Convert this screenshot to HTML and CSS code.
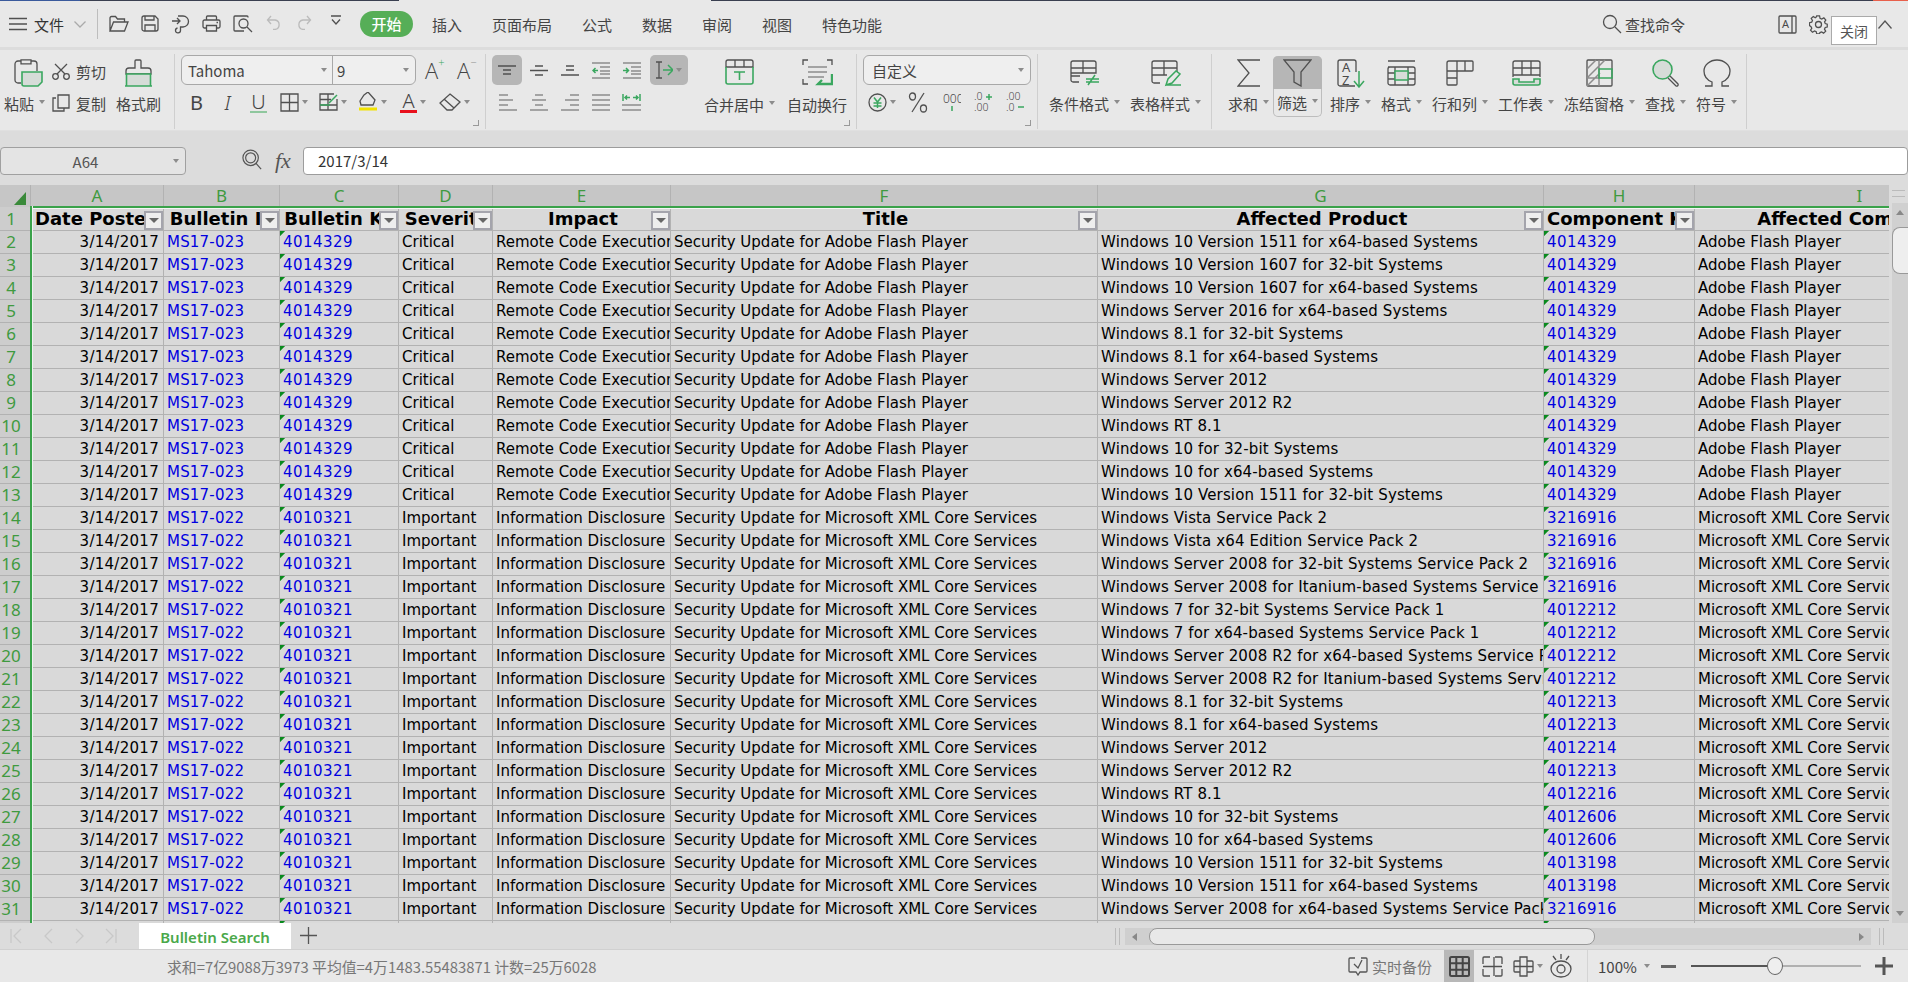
FILE: index.html
```html
<!DOCTYPE html>
<html lang="zh">
<head>
<meta charset="utf-8">
<title>Bulletin Search</title>
<link rel="stylesheet" href="styles.css">
</head>
<body>
<div class="app">
<div class="topline"><i class="tl-blue"></i><i class="tl-dark1"></i><i class="tl-light"></i><i class="tl-dark2"></i><i class="tl-red"></i></div>

<header class="menu">
  <svg class="ham" width="18" height="14" viewBox="0 0 18 14"><path d="M0 1.5h18M0 7h18M0 12.5h18"/></svg>
  <span class="file">文件</span>
  <svg class="chev" width="12" height="7" viewBox="0 0 12 7"><path d="M.5.5 6 6l5.5-5.5"/></svg>
  <span class="mdiv"></span>
  <div class="qat">
    <span class="q"><svg width="20" height="18" viewBox="0 0 20 18"><path d="M1 16V3a1.500 1.500 0 0 1 1.500-1.500h4l2 2.500h7V7M1 16h14.500L19 7H4.500z"/></svg></span>
    <span class="q"><svg width="18" height="17" viewBox="0 0 18 17"><path d="M1 3a2 2 0 0 1 2-2h11l3 3v10a2 2 0 0 1-2 2H3a2 2 0 0 1-2-2zM4 16v-6h10v6M4 1v4h9V1"/></svg></span>
    <span class="q"><svg width="19" height="19" viewBox="0 0 19 19"><path d="M1 6h8M6 3l3 3-3 3M7 1h5a5 5 0 0 1 0 11H9.500v3.500a2.500 2.500 0 1 1-3-2.500"/></svg></span>
    <span class="q"><svg width="19" height="17" viewBox="0 0 19 17"><path d="M4.500 5V2a1 1 0 0 1 1-1h8a1 1 0 0 1 1 1v3M4 13H2.500A1.500 1.500 0 0 1 1 11.500v-5A1.500 1.500 0 0 1 2.500 5h14A1.500 1.500 0 0 1 18 6.500v5a1.500 1.500 0 0 1-1.500 1.500H15M4.500 10.500h10V16h-10zM14.500 7.500h1.500"/></svg></span>
    <span class="q"><svg width="20" height="18" viewBox="0 0 20 18"><path d="M15 2.500V2a1 1 0 0 0-1-1H2a1 1 0 0 0-1 1v13a1 1 0 0 0 1 1h9"/><circle cx="10.500" cy="8.500" r="4.500"/><path d="M14 12l5 5"/></svg></span>
    <span class="q off"><svg width="15" height="15" viewBox="0 0 15 15"><path d="M5 1 1.500 5 5 9M1.500 5h7.500a4.800 4.800 0 0 1 0 9.500H7"/></svg></span>
    <span class="q off"><svg width="15" height="15" viewBox="0 0 15 15"><path d="M10 1l3.500 4L10 9M13.500 5H6a4.800 4.800 0 0 0 0 9.500h2"/></svg></span>
    <span class="q"><svg width="10" height="10" viewBox="0 0 10 10"><path d="M0 1h10M1 4.500 5 9l4-4.500"/></svg></span>
  </div>
  <span class="pill">开始</span>
  <nav class="tabs"><span>插入</span><span>页面布局</span><span>公式</span><span>数据</span><span>审阅</span><span>视图</span><span>特色功能</span></nav>
  <div class="mright">
    <svg width="20" height="20" viewBox="0 0 20 20"><circle cx="8" cy="8" r="6.500"/><path d="M13 13l6 6"/></svg>
    <span class="find">查找命令</span>
    <svg class="book" width="19" height="19" viewBox="0 0 19 19"><path d="M2 1h15a1 1 0 0 1 1 1v15a1 1 0 0 1-1 1H2a1 1 0 0 1-1-1V2a1 1 0 0 1 1-1zM14 1v17"/><text class="svt" x="4" y="13" font-size="11">A</text></svg>
    <svg class="gear" width="19" height="19" viewBox="0 0 19 19"><circle cx="9.500" cy="9.500" r="3"/><path d="M8 1h3l.5 2.500 1.700.8L15.500 3l2 2.200-1.300 2 .7 1.700 2.100.6v3l-2.100.5-.8 1.700 1.300 2.200-2.200 2-2.100-1.300-1.700.7-.5 1.400H8l-.5-2.300-1.700-.7-2.200 1.300-2-2.100 1.300-2.100-.8-1.700L.5 11V8l2.300-.5.8-1.800L2.300 3.500 4.500 1.500l2 1.300 1-.6z" transform="scale(.96)"/></svg>
    <svg class="up" width="14" height="9" viewBox="0 0 14 9"><path d="M.5 8.500 7 1l6.500 7.500"/></svg>
  </div>
  <div class="tip">关闭</div>
</header>

<section class="ribbon">
  <div class="group g1">
    <div class="big paste">
      <span class="ic"><svg width="29" height="28" viewBox="0 0 29 28"><path d="M7 24H4a3 3 0 0 1-3-3V5a3 3 0 0 1 3-3h3M17 2h3a3 3 0 0 1 3 3v7M7 .8h10v4H7z"/><path class="gr" d="M8 13h20v10l-4 4H10a2 2 0 0 1-2-2z"/></svg></span>
      <span class="lb">粘贴<i class="ar"></i></span>
    </div>
    <div class="mid">
      <div class="mi"><svg width="18" height="17" viewBox="0 0 18 17"><circle cx="3.500" cy="13.500" r="2.800"/><circle cx="14.500" cy="13.500" r="2.800"/><path d="M5 11 15 1M13 11 3 1"/></svg><span>剪切</span></div>
      <div class="mi"><svg width="18" height="18" viewBox="0 0 18 18"><path d="M6 1h11v13H6zM4 4H1v13h11v-3"/></svg><span>复制</span></div>
    </div>
    <div class="big brush">
      <span class="ic"><svg width="27" height="28" viewBox="0 0 27 28"><path d="M10 9V2a1 1 0 0 1 1-1h4a1 1 0 0 1 1 1v7h7a3 3 0 0 1 3 3v3H1v-3a3 3 0 0 1 3-3z"/><path class="gr" d="M1.500 15h24v12h-24zM0 27h27"/></svg></span>
      <span class="lb">格式刷</span>
    </div>
  </div>

  <div class="group g2">
    <div class="row1">
      <div class="combo font"><span class="seg seg-font">Tahoma<i class="ar"></i></span><span class="seg seg-size">9<i class="ar"></i></span></div>
      <span class="grow">A<sup>+</sup></span>
      <span class="grow shrink">A<sup>−</sup></span>
    </div>
    <div class="row2">
      <span class="fb w31 b">B</span>
      <span class="fb w31 i">I</span>
      <span class="fb w31"><span class="u">U</span></span>
      <span class="fb w39"><svg width="19" height="19" viewBox="0 0 19 19"><path d="M1 1h17v17H1zM9.500 1v17M1 9.500h17"/></svg><i class="ar"></i></span>
      <span class="fb w39"><svg width="19" height="18" viewBox="0 0 19 18"><path d="M18 6v11H1V1h14M1 6.500h11M1 12h17M9 1v16"/><path class="gl" d="M1 12h10M10 10l8-8"/></svg><i class="ar"></i></span>
      <span class="fb w41"><svg width="20" height="20" viewBox="0 0 20 20"><path d="M6 3 10 0l7 8-2 5H3L2 9z"/><path class="yl" d="M1 17h18"/></svg><i class="ar"></i></span>
      <span class="fb w40"><span class="acolor">A</span><i class="ar"></i></span>
      <span class="fb w42"><svg width="22" height="18" viewBox="0 0 22 18"><path d="M11 1l10 8-8 8H8L1 10zM5 6l10 9"/></svg><i class="ar"></i></span>
    </div>
    <i class="corner"></i>
  </div>

  <div class="group g3">
    <div class="al">
      <div class="alrow">
        <span class="a sel"><svg width="18" height="11" viewBox="0 0 18 11"><path d="M0 1h18M5 5h8M5 9h8"/></svg></span>
        <span class="a"><svg width="18" height="11" viewBox="0 0 18 11"><path d="M5 1h8M0 5.500h18M5 10h8"/></svg></span>
        <span class="a low"><svg width="18" height="11" viewBox="0 0 18 11"><path d="M5 1h8M5 5h8M0 10h18"/></svg></span>
        <span class="a"><svg width="18" height="17" viewBox="0 0 18 17"><path class="lg" d="M0 1h18M8 5h10M8 9h10M0 16h18M8 12h10"/><path class="gl" d="M6 8.500H1M3.500 6 1 8.500 3.500 11"/></svg></span>
        <span class="a"><svg width="18" height="17" viewBox="0 0 18 17"><path class="lg" d="M0 1h18M8 5h10M8 9h10M0 16h18M8 12h10"/><path class="gl" d="M0 8.500h5M3 6l2.500 2.500L3 11"/></svg></span>
        <span class="a sel wide"><svg width="17" height="18" viewBox="0 0 17 18"><path d="M0 1h6M0 17h6M3 1v16"/><path class="gl" d="M7 9h9M12 4l5 5-5 5"/></svg><i class="ar"></i></span>
      </div>
      <div class="alrow two">
        <span class="a"><svg width="18" height="17" viewBox="0 0 18 17"><path class="lg" d="M0 1h9M0 6h14M0 11h9M0 16h18"/></svg></span>
        <span class="a"><svg width="18" height="17" viewBox="0 0 18 17"><path class="lg" d="M5 1h8M2 6h14M5 11h8M0 16h18"/></svg></span>
        <span class="a"><svg width="18" height="17" viewBox="0 0 18 17"><path class="lg" d="M9 1h9M4 6h14M9 11h9M0 16h18"/></svg></span>
        <span class="a"><svg width="18" height="17" viewBox="0 0 18 17"><path class="lg" d="M0 1h18M0 6h18M0 11h18M0 16h18"/></svg></span>
        <span class="a"><svg width="19" height="17" viewBox="0 0 19 17"><path class="lg" d="M0 11h19M0 16h19"/><path class="gl" d="M1 0v7M18 0v7M3 3.500h5M16 3.500h-5M5 1.500 3 3.500 5 5.500M14 1.500l2 2-2 2"/></svg></span>
      </div>
    </div>
    <div class="big merge">
      <span class="ic"><svg width="29" height="26" viewBox="0 0 29 26"><path d="M1 8V3a2 2 0 0 1 2-2h23a2 2 0 0 1 2 2v5H1zM10 1v7M19 1v7"/><path class="gr nf" d="M1 8v15a2 2 0 0 0 2 2h23a2 2 0 0 0 2-2V8M9 13h11M14.500 13v8"/></svg></span>
      <span class="lb">合并居中<i class="ar"></i></span>
    </div>
    <div class="big wrap">
      <span class="ic"><svg width="31" height="27" viewBox="0 0 31 27"><path d="M6 1H1v5M25 1h5v5M1 20v5h5"/><path class="lg" d="M6 8h19M6 13h19M6 18h16"/><path class="gl thick" d="M30 15v10H16M20 21l-4 4 4 0"/></svg></span>
      <span class="lb">自动换行</span>
    </div>
    <i class="corner"></i>
  </div>

  <div class="group g4">
    <div class="combo num"><span class="seg-num">自定义<i class="ar"></i></span></div>
    <div class="row2 nrow">
      <span class="fb n37"><svg width="19" height="19" viewBox="0 0 19 19"><circle cx="9.500" cy="9.500" r="8.500"/><path class="gl" d="M6 4.500 9.500 9 13 4.500M5.500 10h8M5.500 13h8M9.500 9v6"/></svg><i class="ar"></i></span>
      <span class="fb n36"><svg width="20" height="21" viewBox="0 0 20 21"><path d="M16 1 4 20"/><ellipse cx="4.500" cy="4.500" rx="3" ry="3.500"/><ellipse cx="15.500" cy="16.500" rx="3" ry="3.500"/></svg></span>
      <span class="fb n31"><svg width="18" height="20" viewBox="0 0 18 20"><text class="svt" x="0" y="11" font-size="12">000</text><path class="gl" d="M9 14v5"/></svg></span>
      <span class="fb n33"><svg width="19" height="20" viewBox="0 0 19 20"><text class="svt" x="0" y="8" font-size="10.500">.0</text><text class="svt" x="0" y="19" font-size="10.500">.00</text><path class="gl" d="M12 5h6M15 2v6"/></svg></span>
      <span class="fb n31"><svg width="19" height="20" viewBox="0 0 19 20"><text class="svt" x="0" y="8" font-size="10.500">.00</text><text class="svt" x="0" y="19" font-size="10.500">.0</text><path class="gl" d="M12 15h6"/></svg></span>
    </div>
    <i class="corner"></i>
  </div>

  <div class="group g5">
    <div class="big">
      <span class="ic"><svg width="29" height="26" viewBox="0 0 29 26"><path d="M9 22H3a2 2 0 0 1-2-2V3a2 2 0 0 1 2-2h21a2 2 0 0 1 2 2v10H1M1 8h25M13 1v12M1 16h9"/><path class="gl" d="M16 19h13M16 22h13M25 15l-7 10"/></svg></span>
      <span class="lb">条件格式<i class="ar"></i></span>
    </div>
    <div class="big">
      <span class="ic"><svg width="30" height="27" viewBox="0 0 30 27"><path d="M9 23H3a2 2 0 0 1-2-2V3a2 2 0 0 1 2-2h21a2 2 0 0 1 2 2v9M1 8h25M13 1v14M1 15h15"/><path class="gl" d="M15 25h15M15 25l2-6L25 11l4 3-8 9z"/></svg></span>
      <span class="lb">表格样式<i class="ar"></i></span>
    </div>
  </div>

  <div class="group g6">
    <div class="big sum">
      <span class="ic"><svg width="24" height="28" viewBox="0 0 24 28"><path d="M23 1H1l11 13L1 27h22"/></svg></span>
      <span class="lb">求和<i class="ar"></i></span>
    </div>
    <div class="big filter">
      <span class="ic"><svg width="29" height="28" viewBox="0 0 29 28"><path d="M1 1h27L18 13v14l-7-4V13z"/></svg></span>
      <span class="lb">筛选<i class="ar"></i></span>
    </div>
    <div class="big">
      <span class="ic"><svg width="28" height="29" viewBox="0 0 28 29"><path d="M18 27H3a2 2 0 0 1-2-2V3a2 2 0 0 1 2-2h14a2 2 0 0 1 2 2v10"/><text class="svt" x="5" y="13" font-size="13">A</text><text class="svt" x="5" y="26" font-size="13">Z</text><path class="gl" d="M22 12v16M17 22l5 6 5-6"/></svg></span>
      <span class="lb">排序<i class="ar"></i></span>
    </div>
    <div class="big">
      <span class="ic"><svg width="29" height="26" viewBox="0 0 29 26"><path d="M1 1h27M1 7h25a2 2 0 0 1 2 2v14a2 2 0 0 1-2 2H3a2 2 0 0 1-2-2V9a2 2 0 0 1 2-2zM1 13h27M1 19h27M8 7v18M21 7v18"/><path class="gl sd" d="M8 11h13v9H8z"/></svg></span>
      <span class="lb">格式<i class="ar"></i></span>
    </div>
    <div class="big">
      <span class="ic"><svg width="28" height="26" viewBox="0 0 28 26"><path d="M1 3a2 2 0 0 1 2-2h23a1 1 0 0 1 1 1v8a1 1 0 0 1-1 1H11v13a1 1 0 0 1-1 1H2a1 1 0 0 1-1-1zM11 1v10M1 11h10M1 18h10M19 1v10"/></svg></span>
      <span class="lb">行和列<i class="ar"></i></span>
    </div>
    <div class="big">
      <span class="ic"><svg width="29" height="26" viewBox="0 0 29 26"><path d="M1 17V3a2 2 0 0 1 2-2h23a2 2 0 0 1 2 2v14M1 8h27M1 15h27M10 1v14M19 1v14"/><path class="gr" d="M1 19h6v3h15v-3h6v4a2 2 0 0 1-2 2H3a2 2 0 0 1-2-2z"/></svg></span>
      <span class="lb">工作表<i class="ar"></i></span>
    </div>
    <div class="big">
      <span class="ic"><svg width="27" height="28" viewBox="0 0 27 28"><path d="M2 1h23a1 1 0 0 1 1 1v24a1 1 0 0 1-1 1H2a1 1 0 0 1-1-1V2a1 1 0 0 1 1-1z"/><path class="lg" d="M1 10 10 1M1 19 19 1M1 27 14 14M1 19h12M13 1v26"/><path class="gl" d="M13 10h13v9H13z"/></svg></span>
      <span class="lb">冻结窗格<i class="ar"></i></span>
    </div>
    <div class="big">
      <span class="ic"><svg width="28" height="28" viewBox="0 0 28 28"><circle class="gr" cx="10.500" cy="10.500" r="9.500"/><path class="thin2" d="M18 17l8 8a1.500 1.500 0 0 1-2 2l-8-8"/></svg></span>
      <span class="lb">查找<i class="ar"></i></span>
    </div>
    <div class="big">
      <span class="ic"><svg width="28" height="28" viewBox="0 0 28 28"><path d="M2 27h7v-4C4 21 1 17 1 12 1 6 7 1 14 1s13 5 13 11c0 5-3 9-8 11v4h7"/></svg></span>
      <span class="lb">符号<i class="ar"></i></span>
    </div>
  </div>
</section>

<section class="fbar">
  <div class="namebox"><span>A64</span><i class="ar"></i></div>
  <svg class="fz" width="20" height="24" viewBox="0 0 22 26"><circle cx="9.500" cy="9.500" r="8.500"/><circle cx="9.500" cy="9.500" r="5.500"/><path d="M15 15l6 7"/></svg>
  <span class="fx">fx</span>
  <div class="finput">2017/3/14</div>
</section>

<section class="work">
  <div class="sheet">
  <table>
    <colgroup><col class="c0"><col class="ca"><col class="cb"><col class="cc"><col class="cd"><col class="ce"><col class="cf"><col class="cg"><col class="ch"><col class="ci"></colgroup>
    <thead>
      <tr class="cols"><th class="corner-cell"><i class="tri-all"></i></th><th>A</th><th>B</th><th>C</th><th>D</th><th>E</th><th>F</th><th>G</th><th>H</th><th>I</th></tr>
    </thead>
    <tbody>
      <tr class="hr"><th>1</th><td>Date Posted<i class="flt"></i></td><td>Bulletin ID<i class="flt"></i></td><td>Bulletin KB<i class="flt"></i></td><td>Severity<i class="flt"></i></td><td>Impact<i class="flt"></i></td><td>Title<i class="flt"></i></td><td>Affected Product<i class="flt"></i></td><td>Component KB<i class="flt"></i></td><td>Affected Component</td></tr>
      <tr><th>2</th><td>3/14/2017</td><td>MS17-023</td><td>4014329</td><td>Critical</td><td>Remote Code Execution</td><td>Security Update for Adobe Flash Player</td><td>Windows 10 Version 1511 for x64-based Systems</td><td>4014329</td><td>Adobe Flash Player</td></tr>
      <tr><th>3</th><td>3/14/2017</td><td>MS17-023</td><td>4014329</td><td>Critical</td><td>Remote Code Execution</td><td>Security Update for Adobe Flash Player</td><td>Windows 10 Version 1607 for 32-bit Systems</td><td>4014329</td><td>Adobe Flash Player</td></tr>
      <tr><th>4</th><td>3/14/2017</td><td>MS17-023</td><td>4014329</td><td>Critical</td><td>Remote Code Execution</td><td>Security Update for Adobe Flash Player</td><td>Windows 10 Version 1607 for x64-based Systems</td><td>4014329</td><td>Adobe Flash Player</td></tr>
      <tr><th>5</th><td>3/14/2017</td><td>MS17-023</td><td>4014329</td><td>Critical</td><td>Remote Code Execution</td><td>Security Update for Adobe Flash Player</td><td>Windows Server 2016 for x64-based Systems</td><td>4014329</td><td>Adobe Flash Player</td></tr>
      <tr><th>6</th><td>3/14/2017</td><td>MS17-023</td><td>4014329</td><td>Critical</td><td>Remote Code Execution</td><td>Security Update for Adobe Flash Player</td><td>Windows 8.1 for 32-bit Systems</td><td>4014329</td><td>Adobe Flash Player</td></tr>
      <tr><th>7</th><td>3/14/2017</td><td>MS17-023</td><td>4014329</td><td>Critical</td><td>Remote Code Execution</td><td>Security Update for Adobe Flash Player</td><td>Windows 8.1 for x64-based Systems</td><td>4014329</td><td>Adobe Flash Player</td></tr>
      <tr><th>8</th><td>3/14/2017</td><td>MS17-023</td><td>4014329</td><td>Critical</td><td>Remote Code Execution</td><td>Security Update for Adobe Flash Player</td><td>Windows Server 2012</td><td>4014329</td><td>Adobe Flash Player</td></tr>
      <tr><th>9</th><td>3/14/2017</td><td>MS17-023</td><td>4014329</td><td>Critical</td><td>Remote Code Execution</td><td>Security Update for Adobe Flash Player</td><td>Windows Server 2012 R2</td><td>4014329</td><td>Adobe Flash Player</td></tr>
      <tr><th>10</th><td>3/14/2017</td><td>MS17-023</td><td>4014329</td><td>Critical</td><td>Remote Code Execution</td><td>Security Update for Adobe Flash Player</td><td>Windows RT 8.1</td><td>4014329</td><td>Adobe Flash Player</td></tr>
      <tr><th>11</th><td>3/14/2017</td><td>MS17-023</td><td>4014329</td><td>Critical</td><td>Remote Code Execution</td><td>Security Update for Adobe Flash Player</td><td>Windows 10 for 32-bit Systems</td><td>4014329</td><td>Adobe Flash Player</td></tr>
      <tr><th>12</th><td>3/14/2017</td><td>MS17-023</td><td>4014329</td><td>Critical</td><td>Remote Code Execution</td><td>Security Update for Adobe Flash Player</td><td>Windows 10 for x64-based Systems</td><td>4014329</td><td>Adobe Flash Player</td></tr>
      <tr><th>13</th><td>3/14/2017</td><td>MS17-023</td><td>4014329</td><td>Critical</td><td>Remote Code Execution</td><td>Security Update for Adobe Flash Player</td><td>Windows 10 Version 1511 for 32-bit Systems</td><td>4014329</td><td>Adobe Flash Player</td></tr>
      <tr><th>14</th><td>3/14/2017</td><td>MS17-022</td><td>4010321</td><td>Important</td><td>Information Disclosure</td><td>Security Update for Microsoft XML Core Services</td><td>Windows Vista Service Pack 2</td><td>3216916</td><td>Microsoft XML Core Services</td></tr>
      <tr><th>15</th><td>3/14/2017</td><td>MS17-022</td><td>4010321</td><td>Important</td><td>Information Disclosure</td><td>Security Update for Microsoft XML Core Services</td><td>Windows Vista x64 Edition Service Pack 2</td><td>3216916</td><td>Microsoft XML Core Services</td></tr>
      <tr><th>16</th><td>3/14/2017</td><td>MS17-022</td><td>4010321</td><td>Important</td><td>Information Disclosure</td><td>Security Update for Microsoft XML Core Services</td><td>Windows Server 2008 for 32-bit Systems Service Pack 2</td><td>3216916</td><td>Microsoft XML Core Services</td></tr>
      <tr><th>17</th><td>3/14/2017</td><td>MS17-022</td><td>4010321</td><td>Important</td><td>Information Disclosure</td><td>Security Update for Microsoft XML Core Services</td><td>Windows Server 2008 for Itanium-based Systems Service</td><td>3216916</td><td>Microsoft XML Core Services</td></tr>
      <tr><th>18</th><td>3/14/2017</td><td>MS17-022</td><td>4010321</td><td>Important</td><td>Information Disclosure</td><td>Security Update for Microsoft XML Core Services</td><td>Windows 7 for 32-bit Systems Service Pack 1</td><td>4012212</td><td>Microsoft XML Core Services</td></tr>
      <tr><th>19</th><td>3/14/2017</td><td>MS17-022</td><td>4010321</td><td>Important</td><td>Information Disclosure</td><td>Security Update for Microsoft XML Core Services</td><td>Windows 7 for x64-based Systems Service Pack 1</td><td>4012212</td><td>Microsoft XML Core Services</td></tr>
      <tr><th>20</th><td>3/14/2017</td><td>MS17-022</td><td>4010321</td><td>Important</td><td>Information Disclosure</td><td>Security Update for Microsoft XML Core Services</td><td>Windows Server 2008 R2 for x64-based Systems Service Pack 1</td><td>4012212</td><td>Microsoft XML Core Services</td></tr>
      <tr><th>21</th><td>3/14/2017</td><td>MS17-022</td><td>4010321</td><td>Important</td><td>Information Disclosure</td><td>Security Update for Microsoft XML Core Services</td><td>Windows Server 2008 R2 for Itanium-based Systems Service Pack 1</td><td>4012212</td><td>Microsoft XML Core Services</td></tr>
      <tr><th>22</th><td>3/14/2017</td><td>MS17-022</td><td>4010321</td><td>Important</td><td>Information Disclosure</td><td>Security Update for Microsoft XML Core Services</td><td>Windows 8.1 for 32-bit Systems</td><td>4012213</td><td>Microsoft XML Core Services</td></tr>
      <tr><th>23</th><td>3/14/2017</td><td>MS17-022</td><td>4010321</td><td>Important</td><td>Information Disclosure</td><td>Security Update for Microsoft XML Core Services</td><td>Windows 8.1 for x64-based Systems</td><td>4012213</td><td>Microsoft XML Core Services</td></tr>
      <tr><th>24</th><td>3/14/2017</td><td>MS17-022</td><td>4010321</td><td>Important</td><td>Information Disclosure</td><td>Security Update for Microsoft XML Core Services</td><td>Windows Server 2012</td><td>4012214</td><td>Microsoft XML Core Services</td></tr>
      <tr><th>25</th><td>3/14/2017</td><td>MS17-022</td><td>4010321</td><td>Important</td><td>Information Disclosure</td><td>Security Update for Microsoft XML Core Services</td><td>Windows Server 2012 R2</td><td>4012213</td><td>Microsoft XML Core Services</td></tr>
      <tr><th>26</th><td>3/14/2017</td><td>MS17-022</td><td>4010321</td><td>Important</td><td>Information Disclosure</td><td>Security Update for Microsoft XML Core Services</td><td>Windows RT 8.1</td><td>4012216</td><td>Microsoft XML Core Services</td></tr>
      <tr><th>27</th><td>3/14/2017</td><td>MS17-022</td><td>4010321</td><td>Important</td><td>Information Disclosure</td><td>Security Update for Microsoft XML Core Services</td><td>Windows 10 for 32-bit Systems</td><td>4012606</td><td>Microsoft XML Core Services</td></tr>
      <tr><th>28</th><td>3/14/2017</td><td>MS17-022</td><td>4010321</td><td>Important</td><td>Information Disclosure</td><td>Security Update for Microsoft XML Core Services</td><td>Windows 10 for x64-based Systems</td><td>4012606</td><td>Microsoft XML Core Services</td></tr>
      <tr><th>29</th><td>3/14/2017</td><td>MS17-022</td><td>4010321</td><td>Important</td><td>Information Disclosure</td><td>Security Update for Microsoft XML Core Services</td><td>Windows 10 Version 1511 for 32-bit Systems</td><td>4013198</td><td>Microsoft XML Core Services</td></tr>
      <tr><th>30</th><td>3/14/2017</td><td>MS17-022</td><td>4010321</td><td>Important</td><td>Information Disclosure</td><td>Security Update for Microsoft XML Core Services</td><td>Windows 10 Version 1511 for x64-based Systems</td><td>4013198</td><td>Microsoft XML Core Services</td></tr>
      <tr><th>31</th><td>3/14/2017</td><td>MS17-022</td><td>4010321</td><td>Important</td><td>Information Disclosure</td><td>Security Update for Microsoft XML Core Services</td><td>Windows Server 2008 for x64-based Systems Service Pack 2</td><td>3216916</td><td>Microsoft XML Core Services</td></tr>
      <tr><th></th><td></td><td></td><td></td><td></td><td></td><td></td><td></td><td></td><td></td></tr>
    </tbody>
  </table>
  <i class="sel-top"></i>
  <i class="sel-left"></i>
  </div>
  <aside class="vscroll">
    <i class="vgrip"></i>
    <div class="vtrack"><i class="tup"></i><i class="vthumb"></i><i class="tdn"></i></div>
  </aside>
</section>

<section class="tabbar">
  <div class="nav">
    <svg width="12" height="16" viewBox="0 0 12 16"><path d="M1 1v14M11 1 4 8l7 7"/></svg>
    <svg width="10" height="16" viewBox="0 0 10 16"><path d="M9 1 2 8l7 7"/></svg>
    <svg width="10" height="16" viewBox="0 0 10 16"><path d="M1 1l7 7-7 7"/></svg>
    <svg width="12" height="16" viewBox="0 0 12 16"><path d="M11 1v14M1 1l7 7-7 7"/></svg>
  </div>
  <div class="stab">Bulletin Search</div>
  <svg class="plus" width="17" height="17" viewBox="0 0 17 17"><path d="M8.500 0v17M0 8.500h17"/></svg>
  <i class="grip g-l"></i>
  <div class="htrack"><i class="tl"></i><i class="hthumb"></i><i class="tr"></i></div>
  <i class="grip"></i>
</section>

<footer class="status">
  <span class="sum-text">求和=7亿9088万3973 平均值=4万1483.55483871 计数=25万6028</span>
  <div class="sright">
    <svg class="s-bk" width="20" height="19" viewBox="0 0 20 19"><path d="M7 1H2a1 1 0 0 0-1 1v12a1 1 0 0 0 1 1h6l2 3 2-3h6a1 1 0 0 0 1-1V2a1 1 0 0 0-1-1h-5"/><path d="M6 7l4 4 4-8"/></svg>
    <span class="bk">实时备份</span>
    <span class="vw sel"><svg width="21" height="21" viewBox="0 0 21 21"><path class="thick2" d="M2.500 1h16A1.500 1.500 0 0 1 20 2.500v16a1.500 1.500 0 0 1-1.500 1.500h-16A1.500 1.500 0 0 1 1 18.500v-16A1.500 1.500 0 0 1 2.500 1zM1 7.300h19M1 13.700h19M7.300 1v19M13.700 1v19"/></svg></span>
    <span class="vw v2"><svg width="21" height="21" viewBox="0 0 21 21"><path d="M8 1H2a1 1 0 0 0-1 1v6M8 20H2a1 1 0 0 1-1-1v-6M13 1h6a1 1 0 0 1 1 1v6M13 20h6a1 1 0 0 0 1-1v-6M1 10.500h19M12 1v19"/></svg></span>
    <span class="vw v3"><svg width="21" height="21" viewBox="0 0 21 21"><path d="M7 1h7v19H7zM7 5H2a1 1 0 0 0-1 1v9a1 1 0 0 0 1 1h5M14 5h5a1 1 0 0 1 1 1v9a1 1 0 0 1-1 1h-5M1 10.500h19"/></svg><i class="ar"></i></span>
    <span class="vw v4"><svg width="22" height="24" viewBox="0 0 22 24"><ellipse cx="11" cy="15" rx="10" ry="8"/><circle cx="11" cy="15" r="4"/><path d="M11 0v5M3 2l3 4M19 2l-3 4"/></svg></span>
    <i class="sdiv"></i>
    <span class="zoom">100%<i class="ar"></i></span>
    <i class="minus"></i>
    <div class="slider"><i class="knob"></i></div>
    <svg class="s-plus" width="18" height="18" viewBox="0 0 18 18"><path d="M9 0v18M0 9h18"/></svg>
  </div>
</footer>
</div>
</body>
</html>
```

FILE: styles.css
```css
* { box-sizing: border-box; }
html, body { margin: 0; padding: 0; }
body { width: 1908px; height: 982px; overflow: hidden; background: #e8e8e8; color: #444;
  font-family: "Noto Sans CJK SC", "Noto Sans", sans-serif; font-size: 15px; }
i { display: block; font-style: normal; }
svg { display: block; fill: none; stroke: #505050; stroke-width: 1.3; flex: none; }
svg .gr { stroke: #3aa75f; fill: #d6dcd8; stroke-width: 1.6; }
svg .gr.nf { fill: none; }
svg .gl { stroke: #3aa75f; fill: none; stroke-width: 1.5; }
svg .gl.thick { stroke-width: 2.4; }
svg .gl.sd { fill: #d6dcd8; }
svg .lg { stroke: #8c8c8c; stroke-width: 1.5; }
svg .yl { stroke: #f2e300; stroke-width: 3; }
svg .thick2 { stroke-width: 2; stroke: #444; }
.svt { font-family: "Noto Sans", sans-serif; fill: #4a4a4a; stroke: none; }
.app { display: flex; flex-direction: column; height: 982px; }

.topline { display: flex; height: 1px; flex: none; }
.tl-blue { width: 80px; background: #3a5a9c; }
.tl-dark1 { width: 319px; background: #3a3f50; }
.tl-light { width: 312px; background: #e8e8e8; }
.tl-dark2 { width: 1162px; background: #3a3f50; }
.tl-red { flex: 1; background: #e8604c; }

.menu { height: 46px; flex: none; display: flex; align-items: center; padding-left: 9px; position: relative; background: #e8e8e8; }
.file { margin-left: 7px; width: 30px; color: #333; }
.chev { margin-left: 10px; stroke: #aaa; }
.mdiv { width: 1px; height: 30px; background: #bdbdbd; margin-left: 11px; }
.qat { display: flex; margin-left: 5px; }
.q { width: 31px; display: flex; justify-content: center; }
.q.off svg { stroke: #bbb; }
.pill { margin-left: 9px; width: 53px; height: 26px; line-height: 26px; border-radius: 13px; background: #56ae57; color: #fff; text-align: center; font-weight: 500; }
.tabs { display: flex; gap: 30px; margin-left: 19px; color: #444; }
.mright { margin-left: auto; display: flex; align-items: center; padding-right: 16px; }
.find { margin-left: 3px; color: #444; }
.book { margin-left: 93px; }
.gear { margin-left: 12px; }
.up { margin-left: 50px; stroke: #555; }
.tip { position: absolute; right: 31px; top: 15px; width: 46px; height: 29px; background: #fff; border: 1px solid #aaa; text-align: center; line-height: 29px; font-size: 14px; color: #555; }

.ribbon { height: 84px; flex: none; display: flex; border-top: 3px solid #dcdcdc; background: #e8e8e8; border-bottom: 1px solid #e0e0e0; }
.group { height: 75px; margin-top: 4px; position: relative; border-right: 1px solid #cfcfcf; flex: none; }
.g1 { width: 175px; display: flex; padding-left: 4px; }
.g2 { width: 311px; padding: 1px 0 0 6px; }
.g3 { width: 371px; display: flex; padding: 1px 0 0 6px; }
.g4 { width: 181px; padding: 1px 0 0 6px; }
.g5 { width: 174px; display: flex; gap: 10px; padding-left: 11px; }
.g6 { width: 535px; display: flex; gap: 10px; padding-left: 16px; }

.big { display: flex; flex-direction: column; align-items: center; flex: none; padding-top: 4px; }
.ic { height: 30px; display: flex; align-items: center; justify-content: center; }
.lb { display: flex; align-items: center; margin-top: 7px; height: 18px; line-height: 18px; white-space: nowrap; color: #444; }
.ar { width: 0; height: 0; border: 3px solid transparent; border-top: 4px solid #8c8c8c; border-bottom: 0; margin-left: 3px; flex: none; }
.lb .ar { margin-left: 5px; margin-top: -4px; }
.paste .ic { margin-left: 8px; }
.mid { margin-left: 7px; width: 54px; padding-top: 1px; }
.mi { display: flex; align-items: center; justify-content: space-between; height: 32px; }
.brush { margin-left: 10px; }
.corner { position: absolute; right: 6px; bottom: 3px; width: 6px; height: 6px; border-right: 1px solid #999; border-bottom: 1px solid #999; }

.row1 { display: flex; align-items: center; height: 30px; }
.combo { background: #efefef; border: 1px solid #a8a8a8; border-radius: 6px; height: 30px; display: flex; align-items: center; }
.font { width: 235px; }
.seg { display: flex; align-items: center; height: 28px; }
.seg .ar, .seg-num .ar { margin-left: auto; }
.seg-font { width: 151px; padding: 0 5px 0 6px; border-right: 1px solid #a8a8a8; }
.seg-size { flex: 1; padding: 0 6px 0 4px; }
.grow { margin-left: 9px; width: 22px; font-family: "Open Sans", sans-serif; font-size: 22px; line-height: 28px; display: flex; font-weight: 300; }
.grow sup { font-size: 11px; line-height: 12px; color: #3aa75f; }
.grow.shrink { margin-left: 10px; }
.grow.shrink sup { color: #888; }
.row2 { display: flex; margin-top: 7px; height: 20px; }
.fb { display: flex; align-items: center; justify-content: center; height: 20px; font-family: "Noto Sans", sans-serif; font-size: 20px; font-weight: 300; }
.w31 { width: 31px; } .w39 { width: 39px; } .w40 { width: 40px; } .w41 { width: 41px; } .w42 { width: 42px; }
.n37 { width: 37px; } .n36 { width: 36px; } .n31 { width: 31px; } .n33 { width: 33px; }
.b { font-weight: 400; }
.i { font-style: italic; }
.u { border-bottom: 2px solid #8fc79e; line-height: 19px; padding: 0 1px; }
.acolor { border-bottom: 3px solid #e8101c; line-height: 18px; padding: 0 2px; }

.al { width: 196px; }
.alrow { display: flex; height: 30px; }
.alrow.two { margin-top: 7px; height: 20px; }
.a { width: 31px; display: flex; align-items: center; justify-content: center; height: 100%; }
.a.sel { width: 30px; background: #b6b6b6; border-radius: 5px; margin-right: 1px; }
.a.wide { width: 38px; margin-left: 3px; margin-right: 0; }
.merge { margin-left: 16px; padding-top: 2px; }
.merge .lb, .wrap .lb { margin-top: 9px; }
.wrap { margin-left: 12px; padding-top: 2px; }
.num { width: 168px; padding: 0 6px 0 8px; }
.seg-num { display: flex; flex: 1; align-items: center; }

.big.filter { width: 49px; margin: 2px -2px 0 -6px; height: 61px; background: #e8e8e8; border: 1px solid #bdbdbd; border-top: 0; border-radius: 5px; padding-top: 0; }
.filter .ic { background: #b6b6b6; width: 49px; height: 33px; border-radius: 5px 5px 0 0; margin: 0 -1px; }
.filter .lb { margin-top: 5px; }

.fbar { height: 54px; flex: none; background: #dcdcdc; display: flex; align-items: flex-start; padding-top: 16px; }
.namebox { width: 186px; height: 28px; border: 1px solid #a0a0a0; border-radius: 4px; background: #e4e4e4; display: flex; align-items: center; padding-right: 6px; color: #555; }
.namebox span { flex: 1; text-align: center; }
.fz { margin-left: 56px; margin-top: 2px; stroke: #555; }
.fx { font-family: "Liberation Serif", serif; font-style: italic; font-size: 22px; line-height: 27px; margin-left: 13px; width: 26px; color: #555; }
.finput { flex: 1; margin-left: 2px; height: 28px; background: #fff; border: 1px solid #9c9c9c; border-radius: 4px; line-height: 26px; padding-left: 14px; color: #333; }

.work { display: flex; height: 738px; flex: none; background: #dcdcdc; }
.sheet { width: 1889px; height: 738px; overflow: hidden; flex: none; position: relative; }
.sel-top { position: absolute; left: 30px; right: 0; top: 21px; height: 3px; background: #3aa24a; border-bottom: 1px solid #f4f4f4; }
.sel-left { position: absolute; left: 30px; top: 21px; bottom: 0; width: 3px; background: #3aa24a; border-right: 1px solid #f0f0f0; }
table { border-collapse: separate; border-spacing: 0; table-layout: fixed; width: 2025px; font-family: "DejaVu Sans", sans-serif; font-size: 15px; color: #000; }
.c0 { width: 31px; } .ca { width: 133px; } .cb { width: 116px; } .cc { width: 119px; } .cd { width: 94px; }
.ce { width: 178px; } .cf { width: 427px; } .cg { width: 446px; } .ch { width: 151px; } .ci { width: 330px; }
th { font-family: "Noto Sans", sans-serif; font-weight: 400; font-size: 17px; color: #3f9a3f; background: #c9c9c9; padding: 0; border-right: 1px solid #b2b2b2; border-bottom: 1px solid #b2b2b2; }
tbody th { padding-right: 9px; height: 23px; line-height: 20px; background: #cdcdcd; border-right: 0; }
.cols th { height: 22px; line-height: 20px; background: #c6c6c6; border-bottom: 0; }
.corner-cell { position: relative; }
.tri-all { position: absolute; right: 4px; bottom: 2px; width: 0; height: 0; border-left: 12px solid transparent; border-bottom: 13px solid #3a8a3a; }
td { background: #d9d9d9; border-right: 1px solid #b2b2b2; border-bottom: 1px solid #b2b2b2; padding: 0 3px; height: 23px; line-height: 21px; white-space: nowrap; overflow: hidden; position: relative; }
td:nth-child(2) { text-align: right; padding-right: 4px; letter-spacing: .28px; }
td:nth-child(3) { color: #0000e0; letter-spacing: .2px; }
td:nth-child(4), td:nth-child(9) { color: #0000e0; letter-spacing: .45px; background-image: linear-gradient(135deg, #0a8a1e 3.5px, transparent 3.6px); background-size: 6px 6px; background-repeat: no-repeat; }
td:nth-child(8) { letter-spacing: .13px; }
.hr td { font-weight: 700; font-size: 18px; letter-spacing: 0; text-align: center; padding: 1px 0 0 3px; height: 24px; background-image: none; color: #000; line-height: 22px; }
.hr td:nth-child(2) { text-align: left; padding-left: 4px; }
.hr th { height: 24px; }
.flt { position: absolute; right: 0; bottom: 0; width: 19px; height: 19px; background: #eee; border: 2px solid #a4a4ac; }
.flt::after { content: ""; position: absolute; left: 3px; top: 5px; border: 5px solid transparent; border-top: 5px solid #666; border-bottom: 0; }

.vscroll { width: 19px; flex: none; display: flex; flex-direction: column; }
.vgrip { height: 18px; position: relative; }
.vgrip::after { content: ""; display: block; margin: 5px 3px 0; height: 5px; border-top: 1px solid #bbb; border-bottom: 1px solid #bbb; }
.vtrack { flex: 1; margin-left: 3px; background: #d0d0d0; display: flex; flex-direction: column; align-items: center; padding-top: 7px; }
.tup { width: 0; height: 0; border: 4px solid transparent; border-bottom: 5px solid #888; border-top: 0; }
.vthumb { width: 16px; height: 47px; margin-top: 12px; background: #eee; border: 1px solid #999; border-right: 0; border-radius: 8px 0 0 8px; align-self: flex-end; }
.tdn { width: 0; height: 0; border: 4px solid transparent; border-top: 5px solid #888; border-bottom: 0; margin-top: auto; margin-bottom: 7px; }

.tabbar { height: 27px; flex: none; background: #dcdcdc; display: flex; align-items: flex-start; border-bottom: 1px solid #d0d0d0; }
.nav { width: 139px; display: flex; align-items: center; height: 26px; padding-left: 10px; }
.nav svg { stroke: #c8c8c8; }
.nav svg:nth-child(2) { margin-left: 21px; }
.nav svg:nth-child(3) { margin-left: 22px; }
.nav svg:nth-child(4) { margin-left: 20px; }
.stab { width: 152px; height: 26px; background: #fff; color: #4aa84a; text-align: center; line-height: 28px; font-family: "Noto Sans", sans-serif; font-weight: 600; font-size: 15px; }
.plus { margin: 4px 0 0 9px; stroke: #555; }
.grip { width: 5px; height: 17px; margin: 5px 0 0 0; border-left: 1px solid #bbb; border-right: 1px solid #bbb; margin-left: 8px; }
.g-l { margin-left: 798px; margin-right: 5px; }
.htrack { width: 746px; height: 17px; margin-top: 5px; background: #cfcfcf; display: flex; align-items: center; padding-left: 7px; }
.hthumb { width: 446px; height: 17px; background: #e8e8e8; border: 1px solid #999; border-radius: 8px; margin-left: 12px; }
.tl { width: 0; height: 0; border: 4px solid transparent; border-right: 5px solid #888; border-left: 0; }
.tr { width: 0; height: 0; border: 4px solid transparent; border-left: 5px solid #888; border-right: 0; margin-left: auto; margin-right: 7px; }

.status { flex: 1; display: flex; align-items: center; background: #e8e8e8; padding-left: 167px; }
.sum-text { color: #777; font-size: 14.85px; white-space: nowrap; }
.sright { margin-left: auto; display: flex; align-items: center; height: 32px; padding-right: 15px; }
.s-bk { stroke: #555; }
.bk { margin-left: 4px; color: #777; width: 60px; white-space: nowrap; }
.vw { display: flex; align-items: center; justify-content: center; height: 32px; }
.vw.sel { width: 30px; background: #b8b8b8; margin-left: 12px; }
.v2 { margin-left: 7px; width: 22px; }
.v3 { margin-left: 9px; width: 32px; }
.v3 .ar { margin-left: 3px; }
.v4 { margin-left: 6px; width: 22px; }
.sdiv { width: 1px; height: 32px; background: #d4d4d4; margin-left: 15px; }
.zoom { display: flex; align-items: center; margin-left: 10px; color: #444; width: 50px; white-space: nowrap; }
.zoom .ar { margin-left: 7px; }
.minus { width: 15px; height: 3px; background: #666; margin-left: 13px; }
.slider { width: 170px; height: 2px; margin-left: 15px; background: linear-gradient(90deg, #555 0 50%, #b0b0b0 50%); position: relative; }
.knob { position: absolute; left: 76px; top: -8px; width: 16px; height: 18px; border-radius: 50%; background: #efefef; border: 1.5px solid #666; }
.s-plus { margin-left: 14px; stroke: #555; stroke-width: 3; }
```
